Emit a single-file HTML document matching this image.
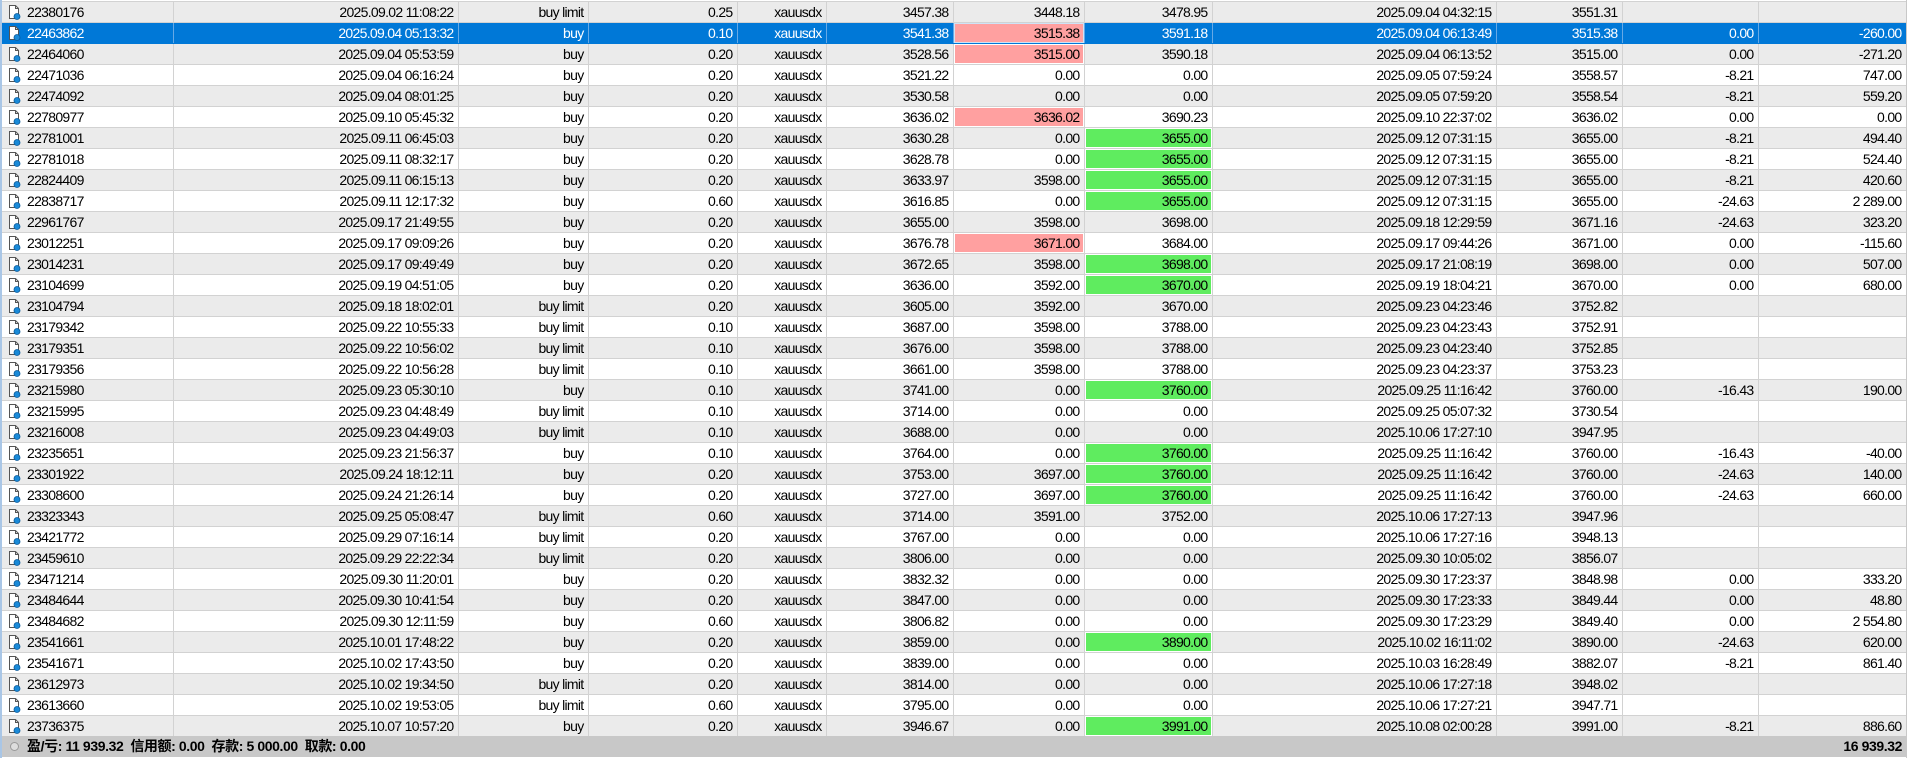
<!DOCTYPE html>
<html><head><meta charset="utf-8"><style>
html,body{margin:0;padding:0;background:#fff;width:1909px;height:766px;overflow:hidden}
body{font-family:"Liberation Sans","Noto Sans CJK SC",sans-serif;font-size:14px;letter-spacing:-0.7px;color:#000;position:relative}
#lb{position:absolute;left:0;top:0;width:2px;height:758px;background:#a9c6e6}
table{position:absolute;left:2px;top:1px;border-collapse:collapse;table-layout:fixed;width:1904px;border-top:1px solid #d2d2d2}
td{height:20px;padding:0 4px 0 0;border-right:1px solid #d2d2d2;border-bottom:1px solid #d2d2d2;text-align:right;white-space:nowrap;overflow:hidden;line-height:20px;box-sizing:border-box}
tr:nth-child(odd) td{background:#ebebeb}
tr:nth-child(even) td{background:#fff}
td.t{text-align:left;padding-left:25px;position:relative}
td.t i{position:absolute;left:6px;top:3px;width:13px;height:15px;background:url() no-repeat}
tr.sel td{background:#0078d7;color:#fff;border-right-color:#66a9e6;border-bottom-color:#0078d7}
tr td.r{background:#ffa0a0;color:#000;box-shadow:inset 0 0 0 1px #fff}
tr.sel td.r{color:#000;box-shadow:inset 0 0 0 1px #cfe3f6}
tr td.g{background:#5fec5f;box-shadow:inset 0 0 0 1px #fff}
#ft{position:absolute;left:2px;top:736px;width:1904px;height:21px;background:#c8c8c8;font-weight:bold;line-height:21px;letter-spacing:-0.4px}
#ft .l{position:absolute;left:25px}
#ft .rr{position:absolute;right:4px}
#ft .c{position:absolute;left:8px;top:6px;width:7px;height:7px;border-radius:50%;border:1px solid #999;background:#ddd}
#rb{position:absolute;left:1906px;top:0;width:1px;height:758px;background:#c8c8c8}
.ic{position:absolute;left:6px;top:3px}
</style></head><body>
<div id="lb"></div>
<table>
<colgroup><col style="width:171px"><col style="width:285px"><col style="width:130px"><col style="width:149px"><col style="width:89px"><col style="width:127px"><col style="width:131px"><col style="width:128px"><col style="width:284px"><col style="width:126px"><col style="width:136px"><col style="width:148px"></colgroup>
<tr><td class="t"><svg class="ic" width="13" height="15" viewBox="0 0 13 15"><path d="M1.5 0.5H7.5L10.5 3.5V13.5H1.5Z" fill="#fff" stroke="#555"/><path d="M7.5 0.5V3.5H10.5" fill="none" stroke="#555"/><circle cx="9" cy="11.5" r="3" fill="#1a8ad8" stroke="#0a5a9a" stroke-width="0.8"/></svg>22380176</td><td>2025.09.02 11:08:22</td><td>buy limit</td><td>0.25</td><td>xauusdx</td><td>3457.38</td><td>3448.18</td><td>3478.95</td><td>2025.09.04 04:32:15</td><td>3551.31</td><td></td><td></td></tr>
<tr class="sel"><td class="t"><svg class="ic" width="13" height="15" viewBox="0 0 13 15"><path d="M1.5 0.5H7.5L10.5 3.5V13.5H1.5Z" fill="#fff" stroke="#555"/><path d="M7.5 0.5V3.5H10.5" fill="none" stroke="#555"/><circle cx="9" cy="11.5" r="3" fill="#1a8ad8" stroke="#0a5a9a" stroke-width="0.8"/></svg>22463862</td><td>2025.09.04 05:13:32</td><td>buy</td><td>0.10</td><td>xauusdx</td><td>3541.38</td><td class="r">3515.38</td><td>3591.18</td><td>2025.09.04 06:13:49</td><td>3515.38</td><td>0.00</td><td>-260.00</td></tr>
<tr><td class="t"><svg class="ic" width="13" height="15" viewBox="0 0 13 15"><path d="M1.5 0.5H7.5L10.5 3.5V13.5H1.5Z" fill="#fff" stroke="#555"/><path d="M7.5 0.5V3.5H10.5" fill="none" stroke="#555"/><circle cx="9" cy="11.5" r="3" fill="#1a8ad8" stroke="#0a5a9a" stroke-width="0.8"/></svg>22464060</td><td>2025.09.04 05:53:59</td><td>buy</td><td>0.20</td><td>xauusdx</td><td>3528.56</td><td class="r">3515.00</td><td>3590.18</td><td>2025.09.04 06:13:52</td><td>3515.00</td><td>0.00</td><td>-271.20</td></tr>
<tr><td class="t"><svg class="ic" width="13" height="15" viewBox="0 0 13 15"><path d="M1.5 0.5H7.5L10.5 3.5V13.5H1.5Z" fill="#fff" stroke="#555"/><path d="M7.5 0.5V3.5H10.5" fill="none" stroke="#555"/><circle cx="9" cy="11.5" r="3" fill="#1a8ad8" stroke="#0a5a9a" stroke-width="0.8"/></svg>22471036</td><td>2025.09.04 06:16:24</td><td>buy</td><td>0.20</td><td>xauusdx</td><td>3521.22</td><td>0.00</td><td>0.00</td><td>2025.09.05 07:59:24</td><td>3558.57</td><td>-8.21</td><td>747.00</td></tr>
<tr><td class="t"><svg class="ic" width="13" height="15" viewBox="0 0 13 15"><path d="M1.5 0.5H7.5L10.5 3.5V13.5H1.5Z" fill="#fff" stroke="#555"/><path d="M7.5 0.5V3.5H10.5" fill="none" stroke="#555"/><circle cx="9" cy="11.5" r="3" fill="#1a8ad8" stroke="#0a5a9a" stroke-width="0.8"/></svg>22474092</td><td>2025.09.04 08:01:25</td><td>buy</td><td>0.20</td><td>xauusdx</td><td>3530.58</td><td>0.00</td><td>0.00</td><td>2025.09.05 07:59:20</td><td>3558.54</td><td>-8.21</td><td>559.20</td></tr>
<tr><td class="t"><svg class="ic" width="13" height="15" viewBox="0 0 13 15"><path d="M1.5 0.5H7.5L10.5 3.5V13.5H1.5Z" fill="#fff" stroke="#555"/><path d="M7.5 0.5V3.5H10.5" fill="none" stroke="#555"/><circle cx="9" cy="11.5" r="3" fill="#1a8ad8" stroke="#0a5a9a" stroke-width="0.8"/></svg>22780977</td><td>2025.09.10 05:45:32</td><td>buy</td><td>0.20</td><td>xauusdx</td><td>3636.02</td><td class="r">3636.02</td><td>3690.23</td><td>2025.09.10 22:37:02</td><td>3636.02</td><td>0.00</td><td>0.00</td></tr>
<tr><td class="t"><svg class="ic" width="13" height="15" viewBox="0 0 13 15"><path d="M1.5 0.5H7.5L10.5 3.5V13.5H1.5Z" fill="#fff" stroke="#555"/><path d="M7.5 0.5V3.5H10.5" fill="none" stroke="#555"/><circle cx="9" cy="11.5" r="3" fill="#1a8ad8" stroke="#0a5a9a" stroke-width="0.8"/></svg>22781001</td><td>2025.09.11 06:45:03</td><td>buy</td><td>0.20</td><td>xauusdx</td><td>3630.28</td><td>0.00</td><td class="g">3655.00</td><td>2025.09.12 07:31:15</td><td>3655.00</td><td>-8.21</td><td>494.40</td></tr>
<tr><td class="t"><svg class="ic" width="13" height="15" viewBox="0 0 13 15"><path d="M1.5 0.5H7.5L10.5 3.5V13.5H1.5Z" fill="#fff" stroke="#555"/><path d="M7.5 0.5V3.5H10.5" fill="none" stroke="#555"/><circle cx="9" cy="11.5" r="3" fill="#1a8ad8" stroke="#0a5a9a" stroke-width="0.8"/></svg>22781018</td><td>2025.09.11 08:32:17</td><td>buy</td><td>0.20</td><td>xauusdx</td><td>3628.78</td><td>0.00</td><td class="g">3655.00</td><td>2025.09.12 07:31:15</td><td>3655.00</td><td>-8.21</td><td>524.40</td></tr>
<tr><td class="t"><svg class="ic" width="13" height="15" viewBox="0 0 13 15"><path d="M1.5 0.5H7.5L10.5 3.5V13.5H1.5Z" fill="#fff" stroke="#555"/><path d="M7.5 0.5V3.5H10.5" fill="none" stroke="#555"/><circle cx="9" cy="11.5" r="3" fill="#1a8ad8" stroke="#0a5a9a" stroke-width="0.8"/></svg>22824409</td><td>2025.09.11 06:15:13</td><td>buy</td><td>0.20</td><td>xauusdx</td><td>3633.97</td><td>3598.00</td><td class="g">3655.00</td><td>2025.09.12 07:31:15</td><td>3655.00</td><td>-8.21</td><td>420.60</td></tr>
<tr><td class="t"><svg class="ic" width="13" height="15" viewBox="0 0 13 15"><path d="M1.5 0.5H7.5L10.5 3.5V13.5H1.5Z" fill="#fff" stroke="#555"/><path d="M7.5 0.5V3.5H10.5" fill="none" stroke="#555"/><circle cx="9" cy="11.5" r="3" fill="#1a8ad8" stroke="#0a5a9a" stroke-width="0.8"/></svg>22838717</td><td>2025.09.11 12:17:32</td><td>buy</td><td>0.60</td><td>xauusdx</td><td>3616.85</td><td>0.00</td><td class="g">3655.00</td><td>2025.09.12 07:31:15</td><td>3655.00</td><td>-24.63</td><td>2 289.00</td></tr>
<tr><td class="t"><svg class="ic" width="13" height="15" viewBox="0 0 13 15"><path d="M1.5 0.5H7.5L10.5 3.5V13.5H1.5Z" fill="#fff" stroke="#555"/><path d="M7.5 0.5V3.5H10.5" fill="none" stroke="#555"/><circle cx="9" cy="11.5" r="3" fill="#1a8ad8" stroke="#0a5a9a" stroke-width="0.8"/></svg>22961767</td><td>2025.09.17 21:49:55</td><td>buy</td><td>0.20</td><td>xauusdx</td><td>3655.00</td><td>3598.00</td><td>3698.00</td><td>2025.09.18 12:29:59</td><td>3671.16</td><td>-24.63</td><td>323.20</td></tr>
<tr><td class="t"><svg class="ic" width="13" height="15" viewBox="0 0 13 15"><path d="M1.5 0.5H7.5L10.5 3.5V13.5H1.5Z" fill="#fff" stroke="#555"/><path d="M7.5 0.5V3.5H10.5" fill="none" stroke="#555"/><circle cx="9" cy="11.5" r="3" fill="#1a8ad8" stroke="#0a5a9a" stroke-width="0.8"/></svg>23012251</td><td>2025.09.17 09:09:26</td><td>buy</td><td>0.20</td><td>xauusdx</td><td>3676.78</td><td class="r">3671.00</td><td>3684.00</td><td>2025.09.17 09:44:26</td><td>3671.00</td><td>0.00</td><td>-115.60</td></tr>
<tr><td class="t"><svg class="ic" width="13" height="15" viewBox="0 0 13 15"><path d="M1.5 0.5H7.5L10.5 3.5V13.5H1.5Z" fill="#fff" stroke="#555"/><path d="M7.5 0.5V3.5H10.5" fill="none" stroke="#555"/><circle cx="9" cy="11.5" r="3" fill="#1a8ad8" stroke="#0a5a9a" stroke-width="0.8"/></svg>23014231</td><td>2025.09.17 09:49:49</td><td>buy</td><td>0.20</td><td>xauusdx</td><td>3672.65</td><td>3598.00</td><td class="g">3698.00</td><td>2025.09.17 21:08:19</td><td>3698.00</td><td>0.00</td><td>507.00</td></tr>
<tr><td class="t"><svg class="ic" width="13" height="15" viewBox="0 0 13 15"><path d="M1.5 0.5H7.5L10.5 3.5V13.5H1.5Z" fill="#fff" stroke="#555"/><path d="M7.5 0.5V3.5H10.5" fill="none" stroke="#555"/><circle cx="9" cy="11.5" r="3" fill="#1a8ad8" stroke="#0a5a9a" stroke-width="0.8"/></svg>23104699</td><td>2025.09.19 04:51:05</td><td>buy</td><td>0.20</td><td>xauusdx</td><td>3636.00</td><td>3592.00</td><td class="g">3670.00</td><td>2025.09.19 18:04:21</td><td>3670.00</td><td>0.00</td><td>680.00</td></tr>
<tr><td class="t"><svg class="ic" width="13" height="15" viewBox="0 0 13 15"><path d="M1.5 0.5H7.5L10.5 3.5V13.5H1.5Z" fill="#fff" stroke="#555"/><path d="M7.5 0.5V3.5H10.5" fill="none" stroke="#555"/><circle cx="9" cy="11.5" r="3" fill="#1a8ad8" stroke="#0a5a9a" stroke-width="0.8"/></svg>23104794</td><td>2025.09.18 18:02:01</td><td>buy limit</td><td>0.20</td><td>xauusdx</td><td>3605.00</td><td>3592.00</td><td>3670.00</td><td>2025.09.23 04:23:46</td><td>3752.82</td><td></td><td></td></tr>
<tr><td class="t"><svg class="ic" width="13" height="15" viewBox="0 0 13 15"><path d="M1.5 0.5H7.5L10.5 3.5V13.5H1.5Z" fill="#fff" stroke="#555"/><path d="M7.5 0.5V3.5H10.5" fill="none" stroke="#555"/><circle cx="9" cy="11.5" r="3" fill="#1a8ad8" stroke="#0a5a9a" stroke-width="0.8"/></svg>23179342</td><td>2025.09.22 10:55:33</td><td>buy limit</td><td>0.10</td><td>xauusdx</td><td>3687.00</td><td>3598.00</td><td>3788.00</td><td>2025.09.23 04:23:43</td><td>3752.91</td><td></td><td></td></tr>
<tr><td class="t"><svg class="ic" width="13" height="15" viewBox="0 0 13 15"><path d="M1.5 0.5H7.5L10.5 3.5V13.5H1.5Z" fill="#fff" stroke="#555"/><path d="M7.5 0.5V3.5H10.5" fill="none" stroke="#555"/><circle cx="9" cy="11.5" r="3" fill="#1a8ad8" stroke="#0a5a9a" stroke-width="0.8"/></svg>23179351</td><td>2025.09.22 10:56:02</td><td>buy limit</td><td>0.10</td><td>xauusdx</td><td>3676.00</td><td>3598.00</td><td>3788.00</td><td>2025.09.23 04:23:40</td><td>3752.85</td><td></td><td></td></tr>
<tr><td class="t"><svg class="ic" width="13" height="15" viewBox="0 0 13 15"><path d="M1.5 0.5H7.5L10.5 3.5V13.5H1.5Z" fill="#fff" stroke="#555"/><path d="M7.5 0.5V3.5H10.5" fill="none" stroke="#555"/><circle cx="9" cy="11.5" r="3" fill="#1a8ad8" stroke="#0a5a9a" stroke-width="0.8"/></svg>23179356</td><td>2025.09.22 10:56:28</td><td>buy limit</td><td>0.10</td><td>xauusdx</td><td>3661.00</td><td>3598.00</td><td>3788.00</td><td>2025.09.23 04:23:37</td><td>3753.23</td><td></td><td></td></tr>
<tr><td class="t"><svg class="ic" width="13" height="15" viewBox="0 0 13 15"><path d="M1.5 0.5H7.5L10.5 3.5V13.5H1.5Z" fill="#fff" stroke="#555"/><path d="M7.5 0.5V3.5H10.5" fill="none" stroke="#555"/><circle cx="9" cy="11.5" r="3" fill="#1a8ad8" stroke="#0a5a9a" stroke-width="0.8"/></svg>23215980</td><td>2025.09.23 05:30:10</td><td>buy</td><td>0.10</td><td>xauusdx</td><td>3741.00</td><td>0.00</td><td class="g">3760.00</td><td>2025.09.25 11:16:42</td><td>3760.00</td><td>-16.43</td><td>190.00</td></tr>
<tr><td class="t"><svg class="ic" width="13" height="15" viewBox="0 0 13 15"><path d="M1.5 0.5H7.5L10.5 3.5V13.5H1.5Z" fill="#fff" stroke="#555"/><path d="M7.5 0.5V3.5H10.5" fill="none" stroke="#555"/><circle cx="9" cy="11.5" r="3" fill="#1a8ad8" stroke="#0a5a9a" stroke-width="0.8"/></svg>23215995</td><td>2025.09.23 04:48:49</td><td>buy limit</td><td>0.10</td><td>xauusdx</td><td>3714.00</td><td>0.00</td><td>0.00</td><td>2025.09.25 05:07:32</td><td>3730.54</td><td></td><td></td></tr>
<tr><td class="t"><svg class="ic" width="13" height="15" viewBox="0 0 13 15"><path d="M1.5 0.5H7.5L10.5 3.5V13.5H1.5Z" fill="#fff" stroke="#555"/><path d="M7.5 0.5V3.5H10.5" fill="none" stroke="#555"/><circle cx="9" cy="11.5" r="3" fill="#1a8ad8" stroke="#0a5a9a" stroke-width="0.8"/></svg>23216008</td><td>2025.09.23 04:49:03</td><td>buy limit</td><td>0.10</td><td>xauusdx</td><td>3688.00</td><td>0.00</td><td>0.00</td><td>2025.10.06 17:27:10</td><td>3947.95</td><td></td><td></td></tr>
<tr><td class="t"><svg class="ic" width="13" height="15" viewBox="0 0 13 15"><path d="M1.5 0.5H7.5L10.5 3.5V13.5H1.5Z" fill="#fff" stroke="#555"/><path d="M7.5 0.5V3.5H10.5" fill="none" stroke="#555"/><circle cx="9" cy="11.5" r="3" fill="#1a8ad8" stroke="#0a5a9a" stroke-width="0.8"/></svg>23235651</td><td>2025.09.23 21:56:37</td><td>buy</td><td>0.10</td><td>xauusdx</td><td>3764.00</td><td>0.00</td><td class="g">3760.00</td><td>2025.09.25 11:16:42</td><td>3760.00</td><td>-16.43</td><td>-40.00</td></tr>
<tr><td class="t"><svg class="ic" width="13" height="15" viewBox="0 0 13 15"><path d="M1.5 0.5H7.5L10.5 3.5V13.5H1.5Z" fill="#fff" stroke="#555"/><path d="M7.5 0.5V3.5H10.5" fill="none" stroke="#555"/><circle cx="9" cy="11.5" r="3" fill="#1a8ad8" stroke="#0a5a9a" stroke-width="0.8"/></svg>23301922</td><td>2025.09.24 18:12:11</td><td>buy</td><td>0.20</td><td>xauusdx</td><td>3753.00</td><td>3697.00</td><td class="g">3760.00</td><td>2025.09.25 11:16:42</td><td>3760.00</td><td>-24.63</td><td>140.00</td></tr>
<tr><td class="t"><svg class="ic" width="13" height="15" viewBox="0 0 13 15"><path d="M1.5 0.5H7.5L10.5 3.5V13.5H1.5Z" fill="#fff" stroke="#555"/><path d="M7.5 0.5V3.5H10.5" fill="none" stroke="#555"/><circle cx="9" cy="11.5" r="3" fill="#1a8ad8" stroke="#0a5a9a" stroke-width="0.8"/></svg>23308600</td><td>2025.09.24 21:26:14</td><td>buy</td><td>0.20</td><td>xauusdx</td><td>3727.00</td><td>3697.00</td><td class="g">3760.00</td><td>2025.09.25 11:16:42</td><td>3760.00</td><td>-24.63</td><td>660.00</td></tr>
<tr><td class="t"><svg class="ic" width="13" height="15" viewBox="0 0 13 15"><path d="M1.5 0.5H7.5L10.5 3.5V13.5H1.5Z" fill="#fff" stroke="#555"/><path d="M7.5 0.5V3.5H10.5" fill="none" stroke="#555"/><circle cx="9" cy="11.5" r="3" fill="#1a8ad8" stroke="#0a5a9a" stroke-width="0.8"/></svg>23323343</td><td>2025.09.25 05:08:47</td><td>buy limit</td><td>0.60</td><td>xauusdx</td><td>3714.00</td><td>3591.00</td><td>3752.00</td><td>2025.10.06 17:27:13</td><td>3947.96</td><td></td><td></td></tr>
<tr><td class="t"><svg class="ic" width="13" height="15" viewBox="0 0 13 15"><path d="M1.5 0.5H7.5L10.5 3.5V13.5H1.5Z" fill="#fff" stroke="#555"/><path d="M7.5 0.5V3.5H10.5" fill="none" stroke="#555"/><circle cx="9" cy="11.5" r="3" fill="#1a8ad8" stroke="#0a5a9a" stroke-width="0.8"/></svg>23421772</td><td>2025.09.29 07:16:14</td><td>buy limit</td><td>0.20</td><td>xauusdx</td><td>3767.00</td><td>0.00</td><td>0.00</td><td>2025.10.06 17:27:16</td><td>3948.13</td><td></td><td></td></tr>
<tr><td class="t"><svg class="ic" width="13" height="15" viewBox="0 0 13 15"><path d="M1.5 0.5H7.5L10.5 3.5V13.5H1.5Z" fill="#fff" stroke="#555"/><path d="M7.5 0.5V3.5H10.5" fill="none" stroke="#555"/><circle cx="9" cy="11.5" r="3" fill="#1a8ad8" stroke="#0a5a9a" stroke-width="0.8"/></svg>23459610</td><td>2025.09.29 22:22:34</td><td>buy limit</td><td>0.20</td><td>xauusdx</td><td>3806.00</td><td>0.00</td><td>0.00</td><td>2025.09.30 10:05:02</td><td>3856.07</td><td></td><td></td></tr>
<tr><td class="t"><svg class="ic" width="13" height="15" viewBox="0 0 13 15"><path d="M1.5 0.5H7.5L10.5 3.5V13.5H1.5Z" fill="#fff" stroke="#555"/><path d="M7.5 0.5V3.5H10.5" fill="none" stroke="#555"/><circle cx="9" cy="11.5" r="3" fill="#1a8ad8" stroke="#0a5a9a" stroke-width="0.8"/></svg>23471214</td><td>2025.09.30 11:20:01</td><td>buy</td><td>0.20</td><td>xauusdx</td><td>3832.32</td><td>0.00</td><td>0.00</td><td>2025.09.30 17:23:37</td><td>3848.98</td><td>0.00</td><td>333.20</td></tr>
<tr><td class="t"><svg class="ic" width="13" height="15" viewBox="0 0 13 15"><path d="M1.5 0.5H7.5L10.5 3.5V13.5H1.5Z" fill="#fff" stroke="#555"/><path d="M7.5 0.5V3.5H10.5" fill="none" stroke="#555"/><circle cx="9" cy="11.5" r="3" fill="#1a8ad8" stroke="#0a5a9a" stroke-width="0.8"/></svg>23484644</td><td>2025.09.30 10:41:54</td><td>buy</td><td>0.20</td><td>xauusdx</td><td>3847.00</td><td>0.00</td><td>0.00</td><td>2025.09.30 17:23:33</td><td>3849.44</td><td>0.00</td><td>48.80</td></tr>
<tr><td class="t"><svg class="ic" width="13" height="15" viewBox="0 0 13 15"><path d="M1.5 0.5H7.5L10.5 3.5V13.5H1.5Z" fill="#fff" stroke="#555"/><path d="M7.5 0.5V3.5H10.5" fill="none" stroke="#555"/><circle cx="9" cy="11.5" r="3" fill="#1a8ad8" stroke="#0a5a9a" stroke-width="0.8"/></svg>23484682</td><td>2025.09.30 12:11:59</td><td>buy</td><td>0.60</td><td>xauusdx</td><td>3806.82</td><td>0.00</td><td>0.00</td><td>2025.09.30 17:23:29</td><td>3849.40</td><td>0.00</td><td>2 554.80</td></tr>
<tr><td class="t"><svg class="ic" width="13" height="15" viewBox="0 0 13 15"><path d="M1.5 0.5H7.5L10.5 3.5V13.5H1.5Z" fill="#fff" stroke="#555"/><path d="M7.5 0.5V3.5H10.5" fill="none" stroke="#555"/><circle cx="9" cy="11.5" r="3" fill="#1a8ad8" stroke="#0a5a9a" stroke-width="0.8"/></svg>23541661</td><td>2025.10.01 17:48:22</td><td>buy</td><td>0.20</td><td>xauusdx</td><td>3859.00</td><td>0.00</td><td class="g">3890.00</td><td>2025.10.02 16:11:02</td><td>3890.00</td><td>-24.63</td><td>620.00</td></tr>
<tr><td class="t"><svg class="ic" width="13" height="15" viewBox="0 0 13 15"><path d="M1.5 0.5H7.5L10.5 3.5V13.5H1.5Z" fill="#fff" stroke="#555"/><path d="M7.5 0.5V3.5H10.5" fill="none" stroke="#555"/><circle cx="9" cy="11.5" r="3" fill="#1a8ad8" stroke="#0a5a9a" stroke-width="0.8"/></svg>23541671</td><td>2025.10.02 17:43:50</td><td>buy</td><td>0.20</td><td>xauusdx</td><td>3839.00</td><td>0.00</td><td>0.00</td><td>2025.10.03 16:28:49</td><td>3882.07</td><td>-8.21</td><td>861.40</td></tr>
<tr><td class="t"><svg class="ic" width="13" height="15" viewBox="0 0 13 15"><path d="M1.5 0.5H7.5L10.5 3.5V13.5H1.5Z" fill="#fff" stroke="#555"/><path d="M7.5 0.5V3.5H10.5" fill="none" stroke="#555"/><circle cx="9" cy="11.5" r="3" fill="#1a8ad8" stroke="#0a5a9a" stroke-width="0.8"/></svg>23612973</td><td>2025.10.02 19:34:50</td><td>buy limit</td><td>0.20</td><td>xauusdx</td><td>3814.00</td><td>0.00</td><td>0.00</td><td>2025.10.06 17:27:18</td><td>3948.02</td><td></td><td></td></tr>
<tr><td class="t"><svg class="ic" width="13" height="15" viewBox="0 0 13 15"><path d="M1.5 0.5H7.5L10.5 3.5V13.5H1.5Z" fill="#fff" stroke="#555"/><path d="M7.5 0.5V3.5H10.5" fill="none" stroke="#555"/><circle cx="9" cy="11.5" r="3" fill="#1a8ad8" stroke="#0a5a9a" stroke-width="0.8"/></svg>23613660</td><td>2025.10.02 19:53:05</td><td>buy limit</td><td>0.60</td><td>xauusdx</td><td>3795.00</td><td>0.00</td><td>0.00</td><td>2025.10.06 17:27:21</td><td>3947.71</td><td></td><td></td></tr>
<tr><td class="t"><svg class="ic" width="13" height="15" viewBox="0 0 13 15"><path d="M1.5 0.5H7.5L10.5 3.5V13.5H1.5Z" fill="#fff" stroke="#555"/><path d="M7.5 0.5V3.5H10.5" fill="none" stroke="#555"/><circle cx="9" cy="11.5" r="3" fill="#1a8ad8" stroke="#0a5a9a" stroke-width="0.8"/></svg>23736375</td><td>2025.10.07 10:57:20</td><td>buy</td><td>0.20</td><td>xauusdx</td><td>3946.67</td><td>0.00</td><td class="g">3991.00</td><td>2025.10.08 02:00:28</td><td>3991.00</td><td>-8.21</td><td>886.60</td></tr>
</table>
<div id="ft"><span class="c"></span><span class="l">盈/亏: 11 939.32&nbsp; 信用额: 0.00&nbsp; 存款: 5 000.00&nbsp; 取款: 0.00</span><span class="rr">16 939.32</span></div>
<div id="rb"></div>
</body></html>
